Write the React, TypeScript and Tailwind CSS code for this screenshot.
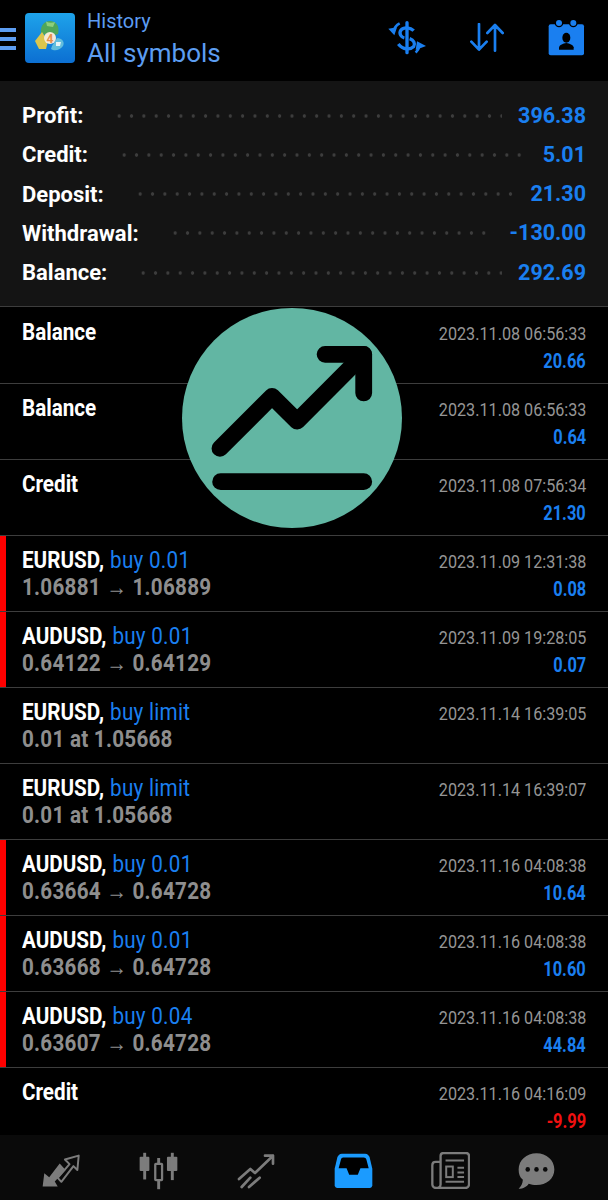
const BLUE = "#1a7ff0";

const summary = [
  { label: "Profit:", value: "396.38" },
  { label: "Credit:", value: "5.01" },
  { label: "Deposit:", value: "21.30" },
  { label: "Withdrawal:", value: "-130.00" },
  { label: "Balance:", value: "292.69" },
];

type Row = { sym: string; act?: string; sub?: string; time: string; amt?: string; red?: boolean; neg?: boolean };
const rows: Row[] = [
  { sym: "Balance", time: "2023.11.08 06:56:33", amt: "20.66" },
  { sym: "Balance", time: "2023.11.08 06:56:33", amt: "0.64" },
  { sym: "Credit", time: "2023.11.08 07:56:34", amt: "21.30" },
  { sym: "EURUSD,", act: "buy 0.01", sub: "1.06881 → 1.06889", time: "2023.11.09 12:31:38", amt: "0.08", red: true },
  { sym: "AUDUSD,", act: "buy 0.01", sub: "0.64122 → 0.64129", time: "2023.11.09 19:28:05", amt: "0.07", red: true },
  { sym: "EURUSD,", act: "buy limit", sub: "0.01 at 1.05668", time: "2023.11.14 16:39:05" },
  { sym: "EURUSD,", act: "buy limit", sub: "0.01 at 1.05668", time: "2023.11.14 16:39:07" },
  { sym: "AUDUSD,", act: "buy 0.01", sub: "0.63664 → 0.64728", time: "2023.11.16 04:08:38", amt: "10.64", red: true },
  { sym: "AUDUSD,", act: "buy 0.01", sub: "0.63668 → 0.64728", time: "2023.11.16 04:08:38", amt: "10.60", red: true },
  { sym: "AUDUSD,", act: "buy 0.04", sub: "0.63607 → 0.64728", time: "2023.11.16 04:08:38", amt: "44.84", red: true },
  { sym: "Credit", time: "2023.11.16 04:16:09", amt: "-9.99", neg: true },
];

function Logo() {
  return (
    <svg width="50" height="50" viewBox="0 0 50 50" className="shrink-0">
      <defs>
        <linearGradient id="lg" x1="0" y1="0" x2="0" y2="1">
          <stop offset="0" stopColor="#1ea3ea" />
          <stop offset="1" stopColor="#0c6fd2" />
        </linearGradient>
      </defs>
      <rect width="50" height="50" rx="4" fill="url(#lg)" />
      <path d="M16 20C15 12 20 8 25 8C31 8 35 13 33 21L25 24Z" fill="#4fa65a" />
      <path d="M21 8.500C24 10 27 10 30 9L28 14L22 13Z" fill="#8ecf7c" />
      <path d="M10 28L17 19L23 28L21 36L14 36Z" fill="#dcc64c" />
      <path d="M27 33L32 25C37 25 40 29 38 33C34 38 29 38 26 36Z" fill="#62bedd" />
      <path d="M31 29L36 29L35 33L31 33Z" fill="#e6f3f5" />
      <circle cx="25" cy="25" r="6" fill="#f4ead8" />
      <text x="25" y="30" textAnchor="middle" fontSize="12" fontWeight="700" fill="#e8904a" fontFamily="Roboto, sans-serif">4</text>
    </svg>
  );
}

function DollarSwap() {
  return (
    <svg width="40" height="34" viewBox="80 65 120 102" fill="none" className="shrink-0">
      <path d="M140 70V160" stroke={BLUE} strokeWidth="10" strokeLinecap="round" />
      <path d="M160 94C150 84 130 82 122 92C114 104 124 114 132 116M148 118C160 122 166 132 160 142C150 152 128 152 114 134" stroke={BLUE} strokeWidth="10" />
      <path d="M84 88L110 84L102 108Z" fill={BLUE} />
      <path d="M100 96C102 86 110 76 118 72" stroke={BLUE} strokeWidth="8" />
      <path d="M197 140L170 126L166 152Z" fill={BLUE} />
      <path d="M178 138C176 146 172 154 166 160" stroke={BLUE} strokeWidth="8" />
    </svg>
  );
}

function Sort() {
  return (
    <svg width="34" height="29" viewBox="330 72 102 87" fill="none" className="shrink-0">
      <path d="M357 75V150M334 128L357 152L380 128M405 155V80M382 102L405 78L428 102" stroke={BLUE} strokeWidth="8" strokeLinecap="round" strokeLinejoin="round" />
    </svg>
  );
}

function Calendar() {
  return (
    <svg width="37" height="37" viewBox="565 56 111 111" className="shrink-0">
      <rect x="567" y="72" width="106" height="93" rx="6" fill={BLUE} />
      <circle cx="598" cy="68" r="13" fill="#000" />
      <circle cx="641" cy="68" r="13" fill="#000" />
      <circle cx="598" cy="68" r="9" fill={BLUE} />
      <circle cx="641" cy="68" r="9" fill={BLUE} />
      <ellipse cx="620" cy="112" rx="12" ry="15" fill="#000" />
      <path d="M598 148V141C600 133 610 130 620 128C630 130 640 133 642 141V148Z" fill="#000" />
    </svg>
  );
}

const G = "#7c7c7c";

function NavTrade() {
  return (
    <svg width="38" height="34" viewBox="124 80 116 102" fill="none">
      <path d="M126 178L131 138L146 150L178 108L196 128L163 163L172 178Z" fill={G} />
      <path d="M236 84L232 128L220 116L183 164L172 152L208 110L194 96Z" stroke={G} strokeWidth="6" strokeLinejoin="round" />
    </svg>
  );
}

function NavCandles() {
  return (
    <svg width="39" height="38" viewBox="414 70 120 116" fill={G}>
      <rect x="416" y="84" width="30" height="44" rx="3" />
      <rect x="427" y="72" width="9" height="82" />
      <rect x="500" y="84" width="32" height="44" rx="3" />
      <rect x="512" y="72" width="9" height="84" />
      <rect x="470" y="88" width="9" height="96" />
      <rect x="464" y="106" width="21" height="50" rx="2" fill="#0a0a0a" stroke={G} strokeWidth="7" />
    </svg>
  );
}

function NavTrend() {
  return (
    <svg width="38" height="36" viewBox="710 74 114 108" fill="none" stroke={G} strokeWidth="8" strokeLinecap="round" strokeLinejoin="round">
      <path d="M716 152L750 122L764 134L818 82M794 82H818V106" />
      <path d="M724 176L750 148M746 176L778 148" />
    </svg>
  );
}

function NavInbox() {
  return (
    <svg width="39" height="35" viewBox="90 72 118 106">
      <path d="M114 74H184C192 74 196 80 198 86L206 120V170C206 175 202 178 198 178H100C96 178 92 175 92 170V120L100 86C102 80 106 74 114 74Z" fill="#1b9bff" />
      <path d="M118 86H180C184 86 187 89 188 92L195 118H170L162 138H136L128 118H104L111 92C112 89 114 86 118 86Z" fill="#000" />
    </svg>
  );
}

function NavNews() {
  return (
    <svg width="39" height="37" viewBox="382 70 118 112" fill="none" stroke={G} strokeWidth="7">
      <path d="M411 100H396C390 100 386 104 386 110V168C386 174 391 179 397 179H486C492 179 497 174 497 168V82C497 77 493 73 488 73H420C414 73 411 77 411 82V168C411 174 405 179 397 179" strokeLinejoin="round" />
      <path d="M426 96H482M462 118H482M462 132H482M462 146H482" strokeWidth="6" />
      <rect x="428" y="114" width="20" height="32" strokeWidth="6" />
      <path d="M426 160H482" strokeWidth="6" />
    </svg>
  );
}

function NavChat() {
  return (
    <svg width="37" height="38" viewBox="640 70 114 114">
      <path d="M697 72C728 72 752 94 752 122C752 150 728 170 697 170C688 170 680 168 673 166C668 174 656 182 642 182C650 174 654 166 655 154C645 146 642 134 642 122C642 94 666 72 697 72Z" fill={G} />
      <circle cx="670" cy="122" r="7" fill="#0a0a0a" />
      <circle cx="697" cy="122" r="7" fill="#0a0a0a" />
      <circle cx="724" cy="122" r="7" fill="#0a0a0a" />
    </svg>
  );
}

function Trend() {
  return (
    <div className="absolute left-[182px] top-[308px] w-[220px] h-[220px] rounded-full bg-[#62b6a3]">
      <svg width="220" height="220" viewBox="37 25 655 655" fill="none" stroke="#000" strokeWidth="50" strokeLinecap="round" strokeLinejoin="round">
        <path d="M150 443L305 288L380 362L578 163" />
        <path d="M463 163H578V278" />
        <path d="M152 542H578" />
      </svg>
    </div>
  );
}

export default function App() {
  return (
    <div className="relative w-[608px] h-[1200px] overflow-hidden bg-black flex flex-col font-['Roboto',sans-serif]">
      <header className="h-[81px] shrink-0 flex items-center">
        <div className="w-4 h-[22px] mt-[-4px] flex flex-col justify-between shrink-0">
          <div className="h-1 bg-[#5c9df2]" />
          <div className="h-1 bg-[#5c9df2]" />
          <div className="h-1 bg-[#5c9df2]" />
        </div>
        <div className="ml-[9px] mt-[-6px]"><Logo /></div>
        <div className="ml-3 mt-[-3px] flex flex-col text-[#5c9df2]">
          <span className="text-[20px] leading-[24px]">History</span>
          <span className="text-[26px] leading-[32px] mt-[4px]">All symbols</span>
        </div>
        <div className="ml-auto flex items-center mt-[-6px]">
          <DollarSwap />
          <div className="ml-[43px]"><Sort /></div>
          <div className="ml-[44px] mr-[23px]"><Calendar /></div>
        </div>
      </header>

      <section className="h-[226px] shrink-0 bg-[#141414] border-b border-[#3d3d3d] pt-[15px] px-[22px] flex flex-col">
        {summary.map((s) => (
          <div key={s.label} className="h-[39.25px] shrink-0 flex items-center text-[21.500px] font-bold">
            <span className="text-white text-[22px]">{s.label}</span>
            <div className="flex-1 ml-[30px] mr-[16px] h-1 bg-[radial-gradient(circle,#3d3d3d_1.4px,transparent_2px)] bg-[length:12.35px_4px] bg-repeat-x bg-left" />
            <span style={{ color: BLUE }}>{s.value}</span>
          </div>
        ))}
      </section>

      <main className="flex-1 min-h-0 overflow-hidden mt-px">
        {rows.map((r, i) => (
          <div key={i} className="h-[76px] flex border-b border-[#3d3d3d] relative">
            {r.red && <div className="absolute left-0 top-0 bottom-0 w-[6px] bg-[#ff0000]" />}
            <div className="pl-[22px] pt-[10px] flex-1 min-w-0">
              <div className="h-[28px] origin-left scale-x-[0.86] whitespace-nowrap text-[24px] leading-[29px]">
                <span className="text-white font-bold">{r.sym}</span>
                {r.act && <span className="ml-[7px] tracking-[0.3px]" style={{ color: BLUE }}>{r.act}</span>}
              </div>
              {r.sub && (
                <div className="h-[26px] origin-left scale-x-[0.86] whitespace-nowrap text-[24px] leading-[26px] font-bold text-[#8e8e8e] tracking-[0.3px]">
                  {r.sub}
                </div>
              )}
            </div>
            <div className="pr-[22px] pt-[15px] flex flex-col items-end">
              <div className="origin-right scale-x-[0.851] whitespace-nowrap text-[19px] leading-[22px] text-[#959595]">{r.time}</div>
              {r.amt && (
                <div className={`origin-right scale-x-[0.82] mt-[5px] whitespace-nowrap text-[20px] leading-[22px] font-bold ${r.neg ? "text-[#f01010]" : "text-[#1a7ff0]"}`}>
                  {r.amt}
                </div>
              )}
            </div>
          </div>
        ))}
      </main>

      <nav className="h-[65px] shrink-0 bg-[#0a0a0a] flex items-center pl-[42px] pt-[6px]">
        <NavTrade />
        <div className="ml-[59px]"><NavCandles /></div>
        <div className="ml-[59px]"><NavTrend /></div>
        <div className="ml-[59px]"><NavInbox /></div>
        <div className="ml-[58px]"><NavNews /></div>
        <div className="ml-[48px]"><NavChat /></div>
      </nav>

      <Trend />
    </div>
  );
}
